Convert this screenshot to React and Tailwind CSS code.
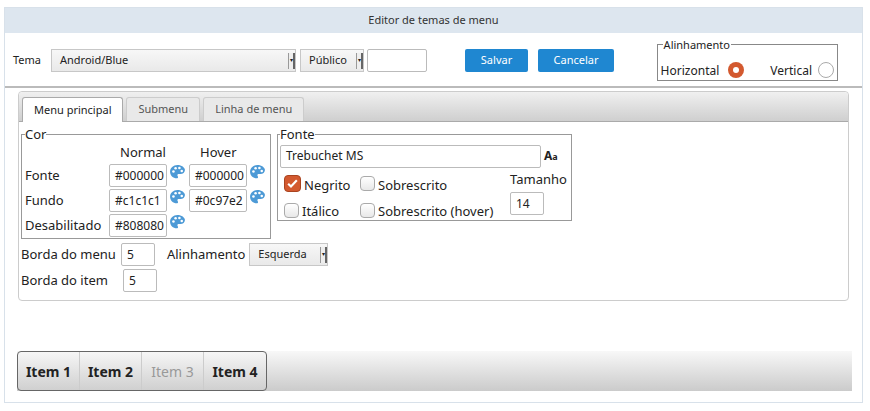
const Palette = () => (
  <svg width="17" height="17" viewBox="0 0 16 16" className="shrink-0">
    <path d="M8 1C4 1 1 3.8 1 7.3c0 3.4 2.8 6.2 6.3 6.2.8 0 1.2-.5 1.2-1.1 0-.7-.6-1-.6-1.7 0-.7.6-1.2 1.3-1.2h1.6c2.3 0 4.2-1.6 4.2-3.8C15 3.5 11.9 1 8 1z" fill="#4d9ad6" />
    <circle cx="4.2" cy="7" r="1.2" fill="#fff" />
    <circle cx="6.2" cy="4" r="1.2" fill="#fff" />
    <circle cx="9.8" cy="3.8" r="1.2" fill="#fff" />
    <circle cx="12" cy="6.5" r="1.2" fill="#fff" />
  </svg>
);

const Check = ({ on }) =>
  on ? (
    <span className="w-[17px] h-[17px] rounded-[4px] bg-[#d3592f] border border-[#a94420] flex items-center justify-center shrink-0">
      <svg width="13" height="13" viewBox="0 0 12 12"><path d="M2 6.2l2.6 2.6L10 3" stroke="#fff" strokeWidth="2" fill="none" /></svg>
    </span>
  ) : (
    <span className="w-[15px] h-[15px] rounded-[4px] border border-[#aaa] bg-gradient-to-b from-white to-[#e8e8e8] shrink-0" />
  );

const Inp = ({ v, w }) => (
  <div className={`h-[23px] border border-[#bbb] rounded-[2px] bg-white px-[5px] flex items-center text-[12px] ${w}`}>{v}</div>
);

const Drop = ({ children, w }) => (
  <div className={`h-[23px] border border-[#c7c7c7] bg-gradient-to-b from-[#f7f7f7] to-[#e9e9e9] flex items-center justify-between ${w}`}>
    <span className="pl-[8px]">{children}</span>
    <span className="h-[16px] w-[7px] border-l border-[#999] bg-[#eee] flex items-center justify-center text-[6px] border-r-2 border-r-[#666]">▾</span>
  </div>
);

export default function App() {
  return (
    <div className="w-[870px] h-[411px] bg-white pt-[7px] px-[4px] font-['Liberation_Sans',Arial,sans-serif] text-[11px] text-[#222]">
      <div className="w-[859px] h-[396px] border border-[#d8e1ea] flex flex-col">
        <div className="h-[25px] bg-[#dde6ef] flex items-center justify-center text-[11px] text-[#333]">Editor de temas de menu</div>
        <div className="h-[55px] border-b-2 border-[#bbb] flex items-center pl-[8px] pr-[24px]">
          <span className="mr-[10px] mt-[2px]">Tema</span>
          <Drop w="w-[245px] mt-[2px]">Android/Blue</Drop>
          <Drop w="w-[64px] ml-[4px] mt-[2px]">Público</Drop>
          <div className="ml-[3px] mt-[2px] w-[60px] h-[23px] border border-[#bbb] rounded-[2px]" />
          <button className="ml-[38px] mt-[2px] w-[63px] h-[23px] bg-[#1f87d1] text-white rounded-[2px]">Salvar</button>
          <button className="ml-[10px] mt-[2px] w-[76px] h-[23px] bg-[#1f87d1] text-white rounded-[2px]">Cancelar</button>
          <fieldset className="ml-auto mb-[2px] w-[180px] h-[44px] border border-[#888] px-[3px] pb-[2px]">
            <legend className="px-[1px] ml-[2px] text-[11px]">Alinhamento</legend>
            <div className="flex items-center text-[12px] mt-[6px]">
              <span className="mt-[3px]">Horizontal</span>
              <span className="ml-[9px] w-[16px] h-[16px] rounded-full bg-[#d3592f] flex items-center justify-center"><span className="w-[6px] h-[6px] rounded-full bg-white" /></span>
              <span className="ml-[26px] mt-[3px]">Vertical</span>
              <span className="ml-[6px] w-[16px] h-[16px] rounded-full border border-[#aaa]" />
            </div>
          </fieldset>
        </div>
        <div className="mx-[13px] mt-[3px] h-[210px] border border-[#ccc] rounded-[4px] flex flex-col font-['DejaVu_Sans',Verdana,sans-serif] text-[13px]">
          <div className="h-[30px] bg-gradient-to-b from-[#f0f0f0] to-[#cfcfcf] border-b border-[#aaa] rounded-t-[4px] flex items-end pl-[3px] gap-[3px] text-[11px]">
            <div className="h-[25px] px-[11px] bg-white border border-[#aaa] border-b-0 rounded-t-[3px] flex items-center -mb-px">Menu principal</div>
            <div className="h-[24px] px-[11px] bg-[#e9e9e9] border border-[#ccc] border-b-0 rounded-t-[3px] flex items-center text-[#555]">Submenu</div>
            <div className="h-[24px] px-[11px] bg-[#e9e9e9] border border-[#ccc] border-b-0 rounded-t-[3px] flex items-center text-[#555]">Linha de menu</div>
          </div>
          <div className="px-[2px] pt-[3px]">
            <div className="flex items-start gap-[6px]">
              <fieldset className="w-[250px] h-[114px] border border-[#999] pl-[3px]">
                <legend>Cor</legend>
                <div className="grid grid-cols-[84px_80px_80px] items-center gap-y-[2px] -mt-[2px]">
                  <span />
                  <span className="text-center pr-[12px]">Normal</span>
                  <span className="pl-[11px]">Hover</span>
                  <span>Fonte</span>
                  <div className="flex items-start gap-[2px]"><Inp v="#000000" w="w-[58px]" /><Palette /></div>
                  <div className="flex items-start gap-[2px]"><Inp v="#000000" w="w-[58px]" /><Palette /></div>
                  <span>Fundo</span>
                  <div className="flex items-start gap-[2px]"><Inp v="#c1c1c1" w="w-[58px]" /><Palette /></div>
                  <div className="flex items-start gap-[2px]"><Inp v="#0c97e2" w="w-[58px]" /><Palette /></div>
                  <span>Desabilitado</span>
                  <div className="flex items-start gap-[2px]"><Inp v="#808080" w="w-[58px]" /><Palette /></div>
                </div>
              </fieldset>
              <fieldset className="w-[295px] h-[96px] border border-[#999] px-[2px]">
                <legend>Fonte</legend>
                <div className="flex items-center gap-[3px]">
                  <Inp v="Trebuchet MS" w="w-[261px]" />
                  <span className="font-bold text-[12px]">A<span className="text-[9px]">a</span></span>
                </div>
                <div className="flex mt-[5px]">
                  <div className="flex flex-col gap-[5px] w-[80px] pl-[4px]">
                    <div className="flex items-center gap-[3px] h-[22px]"><Check on /><span className="mt-[4px]">Negrito</span></div>
                    <div className="flex items-center gap-[3px] h-[21px]"><Check /><span className="mt-[4px]">Itálico</span></div>
                  </div>
                  <div className="flex flex-col gap-[5px] w-[150px]">
                    <div className="flex items-center gap-[3px] h-[22px]"><Check /><span className="mt-[4px]">Sobrescrito</span></div>
                    <div className="flex items-center gap-[3px] h-[21px]"><Check /><span className="mt-[4px]">Sobrescrito (hover)</span></div>
                  </div>
                  <div className="flex flex-col -mt-[3px]">
                    <span>Tamanho</span>
                    <Inp v="14" w="w-[34px] mt-[3px]" />
                  </div>
                </div>
              </fieldset>
            </div>
            <div className="flex items-center mt-[4px] h-[23px]">
              <span>Borda do menu</span>
              <Inp v="5" w="w-[34px] ml-[5px]" />
              <span className="ml-[12px]">Alinhamento</span>
              <div className="ml-[4px] font-['Liberation_Sans',Arial,sans-serif] text-[11px]"><Drop w="w-[79px]">Esquerda</Drop></div>
            </div>
            <div className="flex items-center mt-[3px] h-[23px]">
              <span>Borda do item</span>
              <Inp v="5" w="w-[34px] ml-[15px]" />
            </div>
          </div>
        </div>
        <div className="mt-[50px] ml-[12px] w-[835px] h-[40px] bg-gradient-to-b from-[#f8f8f8] to-[#cbcbcb] flex font-['DejaVu_Sans_Condensed','DejaVu_Sans',sans-serif] font-bold text-[14px]">
          <div className="h-full border border-[#666] rounded-[4px] bg-gradient-to-b from-[#f6f6f6] to-[#d0d0d0] flex">
            <div className="w-[62px] flex items-center justify-center border-r border-[#ccc]">Item 1</div>
            <div className="w-[62px] flex items-center justify-center border-r border-[#ccc]">Item 2</div>
            <div className="w-[62px] flex items-center justify-center border-r border-[#ccc] text-[#999] font-normal">Item 3</div>
            <div className="w-[62px] flex items-center justify-center">Item 4</div>
          </div>
        </div>
      </div>
    </div>
  );
}
